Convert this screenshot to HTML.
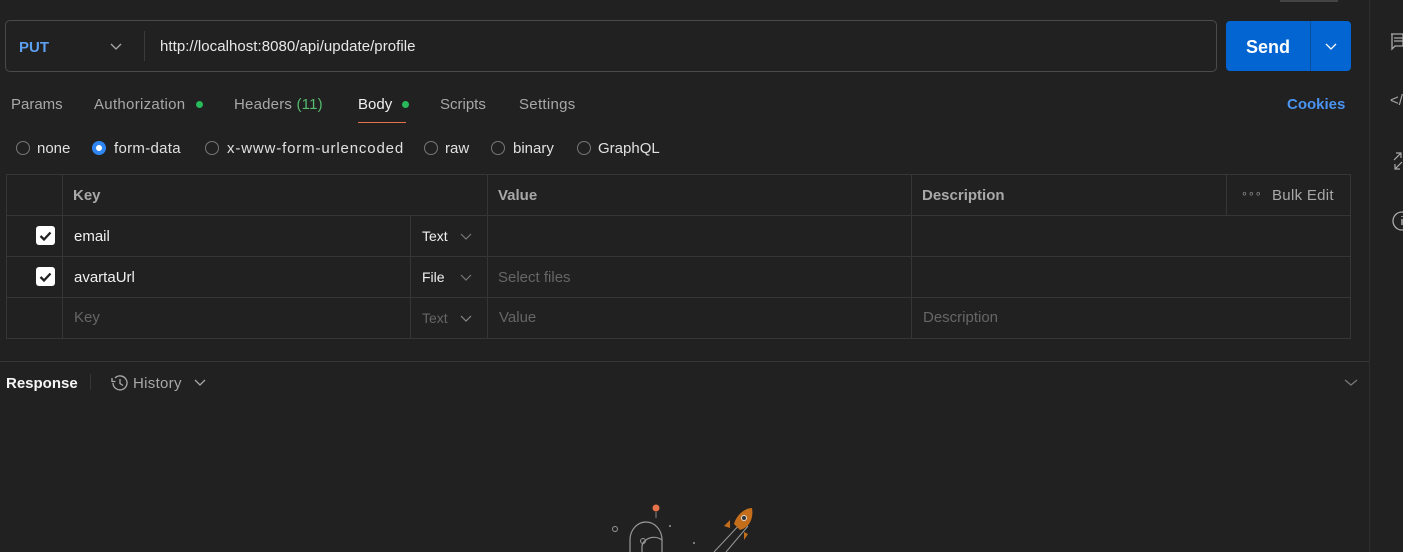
<!DOCTYPE html>
<html><head><style>
*{box-sizing:border-box;margin:0;padding:0}
body{width:1403px;height:552px;background:#212121;font-family:"Liberation Sans",sans-serif;color:#c8c8c8;position:relative;overflow:hidden;font-size:14px}
.a{position:absolute;white-space:nowrap}
.cell{position:absolute;border:1px solid #363636}
.r{position:absolute;top:141px;width:14px;height:14px;border:1px solid #777;border-radius:50%}
.rt{position:absolute;top:140px;font-size:15px;color:#e0e0e0;white-space:nowrap}
</style></head><body>
<div class="a" style="left:1280px;top:0;width:58px;height:2px;background:#444"></div>
<div class="a" style="left:1369px;top:0;width:1px;height:552px;background:#2e2e2e"></div>
<div class="a" style="left:5px;top:20px;width:1212px;height:52px;border:1px solid #4a4a4a;border-radius:5px"></div>
<div class="a" style="left:19px;top:39px;color:#5d9ff0;font-weight:bold;font-size:15px">PUT</div>
<svg class="a" style="left:110px;top:43px" width="12" height="8"><path d="M1 1l5 5 5-5" stroke="#aaa" fill="none" stroke-width="1.3"/></svg>
<div class="a" style="left:144px;top:31px;width:1px;height:30px;background:#3a3a3a"></div>
<div class="a" style="left:160px;top:38px;color:#e8e8e8;font-size:15px;letter-spacing:0.05px">http://localhost:8080/api/update/profile</div>
<div class="a" style="left:1226px;top:21px;width:125px;height:50px;background:#0265d2;border-radius:4px"></div>
<div class="a" style="left:1310px;top:21px;width:1px;height:50px;background:#0a4f9e"></div>
<div class="a" style="left:1246px;top:37px;color:#fff;font-weight:bold;font-size:18px">Send</div>
<svg class="a" style="left:1325px;top:43px" width="12" height="8"><path d="M1 1l5 5 5-5" stroke="#fff" fill="none" stroke-width="1.3"/></svg>
<div class="a" style="left:11px;top:96px;font-size:15px;color:#a8a8a8">Params</div>
<div class="a" style="left:94px;top:96px;font-size:15px;color:#a8a8a8;letter-spacing:0.3px">Authorization</div>
<div class="a" style="left:196px;top:101px;width:7px;height:7px;border-radius:50%;background:#27b95a"></div>
<div class="a" style="left:234px;top:96px;font-size:15px;color:#a8a8a8;letter-spacing:0.2px">Headers <span style="color:#55b96e">(11)</span></div>
<div class="a" style="left:358px;top:96px;font-size:15px;color:#f0f0f0">Body</div>
<div class="a" style="left:402px;top:101px;width:7px;height:7px;border-radius:50%;background:#27b95a"></div>
<div class="a" style="left:358px;top:122px;width:48px;height:1px;background:#e5734a"></div>
<div class="a" style="left:440px;top:96px;font-size:15px;color:#a8a8a8">Scripts</div>
<div class="a" style="left:519px;top:96px;font-size:15px;color:#a8a8a8;letter-spacing:0.3px">Settings</div>
<div class="a" style="left:1287px;top:96px;font-size:15px;color:#4a93f0;font-weight:bold">Cookies</div>
<div class="r" style="left:16px"></div><div class="rt" style="left:37px">none</div>
<div class="r" style="left:92px;border:4px solid #2f86f0;background:#fff"></div><div class="rt" style="left:114px;letter-spacing:0.3px">form-data</div>
<div class="r" style="left:205px"></div><div class="rt" style="left:227px;letter-spacing:0.85px">x-www-form-urlencoded</div>
<div class="r" style="left:424px"></div><div class="rt" style="left:445px">raw</div>
<div class="r" style="left:491px"></div><div class="rt" style="left:513px">binary</div>
<div class="r" style="left:577px"></div><div class="rt" style="left:598px">GraphQL</div>
<div class="cell" style="left:6px;top:174px;width:1345px;height:165px"></div>
<div class="a" style="left:62px;top:174px;width:1px;height:165px;background:#363636"></div>
<div class="a" style="left:410px;top:215px;width:1px;height:124px;background:#363636"></div>
<div class="a" style="left:487px;top:174px;width:1px;height:165px;background:#363636"></div>
<div class="a" style="left:911px;top:174px;width:1px;height:165px;background:#363636"></div>
<div class="a" style="left:1226px;top:174px;width:1px;height:41px;background:#363636"></div>
<div class="a" style="left:6px;top:215px;width:1345px;height:1px;background:#363636"></div>
<div class="a" style="left:6px;top:256px;width:1345px;height:1px;background:#363636"></div>
<div class="a" style="left:6px;top:297px;width:1345px;height:1px;background:#363636"></div>
<div class="a" style="left:73px;top:187px;font-weight:bold;color:#a8a8a8;font-size:15px">Key</div>
<div class="a" style="left:498px;top:187px;font-weight:bold;color:#a8a8a8;font-size:15px">Value</div>
<div class="a" style="left:922px;top:187px;font-weight:bold;color:#a8a8a8;font-size:15px">Description</div>
<div class="a" style="left:1241px;top:187px;color:#999;font-size:11px">∘∘∘</div>
<div class="a" style="left:1272px;top:187px;color:#a8a8a8;font-size:15px;letter-spacing:0.3px">Bulk Edit</div>
<svg class="a" style="left:35px;top:225px" width="22" height="22"><rect x="1" y="1" width="19" height="19" rx="3" fill="#fff"/><path d="M5.5 11l3.5 3.5 6.5-7" stroke="#212121" stroke-width="2.3" fill="none"/></svg>
<svg class="a" style="left:35px;top:266px" width="22" height="22"><rect x="1" y="1" width="19" height="19" rx="3" fill="#fff"/><path d="M5.5 11l3.5 3.5 6.5-7" stroke="#212121" stroke-width="2.3" fill="none"/></svg>
<div class="a" style="left:74px;top:228px;color:#f0f0f0;font-size:15px">email</div>
<div class="a" style="left:74px;top:269px;color:#f0f0f0;font-size:15px">avartaUrl</div>
<div class="a" style="left:74px;top:309px;color:#666;font-size:15px">Key</div>
<div class="a" style="left:422px;top:228px;color:#f0f0f0;font-size:14px">Text</div>
<div class="a" style="left:422px;top:269px;color:#f0f0f0;font-size:14px">File</div>
<div class="a" style="left:422px;top:310px;color:#666;font-size:14px">Text</div>
<svg class="a" style="left:460px;top:233px" width="12" height="8"><path d="M1 1l5 5 5-5" stroke="#777" fill="none" stroke-width="1.2"/></svg>
<svg class="a" style="left:460px;top:274px" width="12" height="8"><path d="M1 1l5 5 5-5" stroke="#777" fill="none" stroke-width="1.2"/></svg>
<svg class="a" style="left:460px;top:315px" width="12" height="8"><path d="M1 1l5 5 5-5" stroke="#888" fill="none" stroke-width="1.2"/></svg>
<div class="a" style="left:498px;top:269px;color:#666;font-size:15px">Select files</div>
<div class="a" style="left:499px;top:309px;color:#666;font-size:15px">Value</div>
<div class="a" style="left:923px;top:309px;color:#666;font-size:15px">Description</div>
<div class="a" style="left:0;top:361px;width:1369px;height:1px;background:#363636"></div>
<div class="a" style="left:6px;top:375px;color:#f5f5f5;font-weight:bold;font-size:15px">Response</div>
<div class="a" style="left:90px;top:374px;width:1px;height:16px;background:#363636"></div>
<svg class="a" style="left:109px;top:373px" width="20" height="20"><path d="M4 10a7 7 0 1 0 2-5" stroke="#aaa" fill="none" stroke-width="1.3"/><path d="M3 5v3.5h3.5" stroke="#aaa" fill="none" stroke-width="1.3"/><path d="M11 6v4.5l3 2" stroke="#aaa" fill="none" stroke-width="1.3"/></svg>
<div class="a" style="left:133px;top:375px;color:#a8a8a8;font-size:15px;letter-spacing:0.3px">History</div>
<svg class="a" style="left:194px;top:379px" width="12" height="8"><path d="M1 1l5 5 5-5" stroke="#aaa" fill="none" stroke-width="1.3"/></svg>
<svg class="a" style="left:1344px;top:379px" width="14" height="8"><path d="M1 1l6 5 6-5" stroke="#777" fill="none" stroke-width="1.3"/></svg>
<svg class="a" style="left:1390px;top:32px" width="13" height="20"><path d="M1 2h12v12H5l-3 3V2z" stroke="#aaa" fill="none" stroke-width="1.3"/><path d="M4 6h9M4 9h9" stroke="#aaa" stroke-width="1.2"/></svg>
<div class="a" style="left:1390px;top:92px;color:#aaa;font-size:15px">&lt;/</div>
<svg class="a" style="left:1393px;top:152px" width="10" height="18"><path d="M1 8l7-7M3 1h5v5M9 10l-7 7M2 12v5h5" stroke="#aaa" fill="none" stroke-width="1.2"/></svg>
<svg class="a" style="left:1390px;top:210px" width="13" height="22"><circle cx="12" cy="11" r="9" stroke="#aaa" fill="none" stroke-width="1.3"/><path d="M12 9v6M12 6v1" stroke="#aaa" stroke-width="1.5"/></svg>
<svg class="a" style="left:600px;top:500px" width="160" height="52">
<circle cx="56" cy="8" r="3.5" fill="#e5734a"/>
<path d="M56 12v6" stroke="#888"/>
<path d="M30 52V40a16 18 0 0 1 32 0v12" stroke="#999" fill="none" stroke-width="1.2"/>
<path d="M62 40a12 10 0 0 0-20 6v6" stroke="#999" fill="none" stroke-width="1.2"/>
<circle cx="43" cy="41" r="2.5" stroke="#999" fill="none"/>
<circle cx="15" cy="29" r="2.5" stroke="#999" fill="none"/>
<path d="M94 42v2M93 43h2M69 26h2M70 25v2" stroke="#999"/>
<path d="M142 22l-28 30M148 26l-22 26" stroke="#999" fill="none"/>
<path d="M152 8c-8 0-16 8-18 16l6 6c8-2 14-10 12-22z" fill="#c46d1a"/>
<path d="M130 20l-6 6 6 2zM144 32l0 8 4-6z" fill="#c46d1a"/>
<circle cx="144" cy="18" r="2.5" fill="#333" stroke="#ddd"/>
</svg>
</body></html>
